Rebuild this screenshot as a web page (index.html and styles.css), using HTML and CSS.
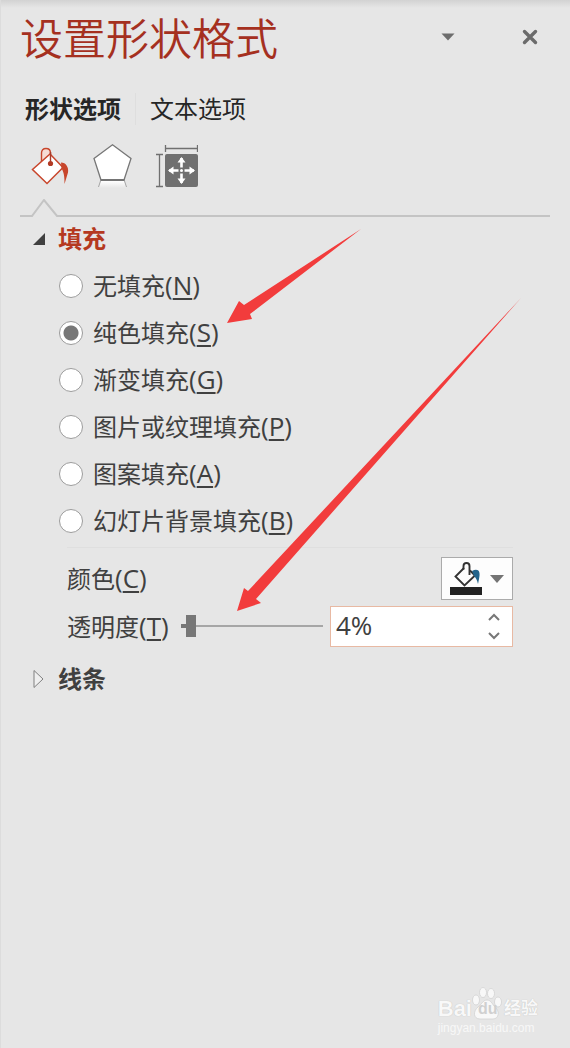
FILE: index.html
```html
<!DOCTYPE html>
<html lang="zh-CN">
<head>
    <meta charset="utf-8">
    <meta name="viewport" content="width=device-width, initial-scale=1.0">
    <title>设置形状格式</title>
    <link rel="stylesheet" href="styles.css">
</head>
<body>
    <div class="pane">
        <header class="pane-header">
            <h1>设置形状格式</h1>
            <button type="button" class="icon-button" aria-label="任务窗格选项">
                <svg width="14" height="8" viewBox="0 0 14 8"><path d="M0.5 0.5h13L7 7.5z" fill="#6d6d6d"/></svg>
            </button>
            <button type="button" class="icon-button" aria-label="关闭">
                <svg width="16" height="16" viewBox="0 0 16 16"><path d="M2.5 2.5l11 11M13.5 2.5l-11 11" stroke="#6b6b6b" stroke-width="3.4" stroke-linecap="round"/></svg>
            </button>
        </header>

        <nav class="tabs">
            <button type="button" class="tab active">形状选项</button>
            <button type="button" class="tab">文本选项</button>
        </nav>

        <nav class="categories">
            <button type="button" class="category" aria-label="填充与线条">
                <svg width="40" height="44" viewBox="0 0 40 44" fill="none">
                    <path d="M11.500 18V9q0-4.500 4.500-4.500T20.500 9v3" fill="#f6dcd5" stroke="#c8462c" stroke-width="1.400"/>
                    <path d="M20 10L33 23.500 17 39.500 2.500 25.500z" fill="#fff" stroke="#c8462c" stroke-width="1.500"/>
                    <path d="M31 18.500c5 0 8 5 7 10l-3.500 11.500c0-6 0-10-3-16z" fill="#c8462c"/>
                    <path d="M20.500 8v11" stroke="#a73a28" stroke-width="1.400"/>
                    <circle cx="20.500" cy="19.500" r="2.600" fill="#b23a24"/>
                </svg>
            </button>
            <button type="button" class="category" aria-label="效果">
                <svg width="40" height="44" viewBox="0 0 40 44" fill="none">
                    <defs>
                        <linearGradient id="mirror" x1="0" y1="0" x2="0" y2="1">
                            <stop offset="0" stop-color="#fff"/>
                            <stop offset="1" stop-color="#e6e6e6"/>
                        </linearGradient>
                    </defs>
                    <path d="M9 37h23l3 7H6z" fill="url(#mirror)"/>
                    <path d="M8.500 37l-2 6M32.500 37l2 6" stroke="#a5a5a5"/>
                    <path d="M20.500 0.800L39 14.500 32 36H9L2 14.500z" fill="#fff" stroke="#777" stroke-width="1.300"/>
                    <path d="M8.500 36h24" stroke="#747474" stroke-width="2"/>
                </svg>
            </button>
            <button type="button" class="category" aria-label="大小与属性">
                <svg width="44" height="44" viewBox="0 0 44 44" fill="none">
                    <path d="M11.500 1v7M43.500 1v7M11.500 4.500h32M2 10.500h7M2 42.500h7M5.500 10.500v32" stroke="#707070" stroke-width="1.300"/>
                    <rect x="11" y="10" width="33" height="33" rx="2" fill="#707070"/>
                    <path d="M27.500 14v25M15 26.500h25" stroke="#fff" stroke-width="2.600"/>
                    <path d="M27.500 13l4 5.500h-8zM27.500 40l4-5.500h-8zM14 26.500l5.500-4v8zM41 26.500l-5.500-4v8z" fill="#fff"/>
                    <rect x="24.500" y="23.500" width="6" height="6" fill="#707070"/>
                    <circle cx="27.500" cy="26.500" r="1.500" fill="#fff"/>
                </svg>
            </button>
        </nav>
        <div class="notch-line">
            <svg width="38" height="18" viewBox="0 0 38 18"><path d="M0 17h12L24 1l13 16h1" fill="none" stroke="#c4c4c4" stroke-width="2"/></svg>
        </div>

        <section>
            <h2 class="section-title open">
                <button type="button" aria-expanded="true">
                    <svg width="14" height="14" viewBox="0 0 14 14"><path d="M13 1v12H1z" fill="#404040"/></svg>
                    填充
                </button>
            </h2>
            <div class="fill-options">
                <label><input type="radio" name="fill"><span>无填充<span class="key">(<u>N</u>)</span></span></label>
                <label><input type="radio" name="fill" checked><span>纯色填充<span class="key">(<u>S</u>)</span></span></label>
                <label><input type="radio" name="fill"><span>渐变填充<span class="key">(<u>G</u>)</span></span></label>
                <label><input type="radio" name="fill"><span>图片或纹理填充<span class="key">(<u>P</u>)</span></span></label>
                <label><input type="radio" name="fill"><span>图案填充<span class="key">(<u>A</u>)</span></span></label>
                <label><input type="radio" name="fill"><span>幻灯片背景填充<span class="key">(<u>B</u>)</span></span></label>
            </div>
            <div class="fill-settings">
                <div class="row">
                    <label for="color">颜色<span class="key">(<u>C</u>)</span></label>
                    <button type="button" id="color" class="color-button">
                        <svg width="34" height="36" viewBox="0 0 34 36" fill="none">
                            <path d="M15 7L6.500 15.500l9 9L26 14.500 21 9.500" stroke="#333" stroke-width="1.900"/>
                            <path d="M14.500 8.500V5q0-3 3-3t3 3v9" stroke="#333" stroke-width="1.900"/>
                            <path d="M23 10c6-3 9 0 7 8l-1 5c-1-4-2-6-4-8z" fill="#24658c"/>
                            <rect x="1" y="26" width="32" height="8" fill="#222"/>
                        </svg>
                        <svg width="14" height="8" viewBox="0 0 14 8"><path d="M0 0h14L7 8z" fill="#747474"/></svg>
                    </button>
                </div>
                <div class="row">
                    <label for="transparency">透明度<span class="key">(<u>T</u>)</span></label>
                    <input type="range" id="transparency" class="slider" min="0" max="100" value="4">
                    <div class="spinner">
                        <input type="text" id="transparencyValue" value="4%" aria-label="透明度">
                        <div class="spinner-buttons">
                            <button type="button" aria-label="增加"><svg width="12" height="8" viewBox="0 0 12 8"><path d="M1 7l5-5 5 5" fill="none" stroke="#777" stroke-width="2"/></svg></button>
                            <button type="button" aria-label="减少"><svg width="12" height="8" viewBox="0 0 12 8"><path d="M1 1l5 5 5-5" fill="none" stroke="#777" stroke-width="2"/></svg></button>
                        </div>
                    </div>
                </div>
            </div>
        </section>

        <section>
            <h2 class="section-title">
                <button type="button" aria-expanded="false">
                    <svg width="14" height="20" viewBox="0 0 14 20"><path d="M2 1.500v17l9-8.500z" fill="#efefef" stroke="#808080"/></svg>
                    线条
                </button>
            </h2>
        </section>

        <!-- annotation arrows -->
        <svg class="arrow arrow-fill" width="134" height="94" viewBox="0 0 134 94"><path d="M134 0L23 85l2 5-25 4 12-22 5 4z" fill="#f23c3c"/></svg>
        <svg class="arrow arrow-slider" width="286" height="314" viewBox="0 0 286 314"><path d="M285 0L20 301l5 4-24 8 7-23 4 3z" fill="#f23c3c"/></svg>

        <div class="watermark">
            <div class="watermark-logo">
                <span>Bai</span>
                <span class="paw">
                    <svg width="30" height="34" viewBox="0 0 30 34" fill="#f8f8f8" stroke="#cfcfcf" stroke-width="0.700">
                        <ellipse cx="4" cy="14" rx="3.500" ry="5"/>
                        <ellipse cx="11" cy="6.500" rx="3.500" ry="5"/>
                        <ellipse cx="19" cy="7.500" rx="3.500" ry="5"/>
                        <ellipse cx="26" cy="16" rx="3.500" ry="5"/>
                        <path d="M15 14c4 0 5 4 8 7 5 4 4 12-2 12H8C1 33 1 25 6 21c4-3 5-7 9-7z"/>
                    </svg>
                    <span class="paw-text">du</span>
                </span>
                <span class="watermark-cn">经验</span>
            </div>
            <div class="watermark-url">jingyan.baidu.com</div>
        </div>
    </div>
</body>
</html>
```
FILE: styles.css
```css
* {
    box-sizing: border-box;
}
body {
    margin: 0;
    min-height: 100vh;
    background: #e6e6e6 linear-gradient(#d2d2d2, #e6e6e6) no-repeat top / 100% 8px;
    color: #404040;
    font-family: "Open Sans", "Noto Sans CJK SC", sans-serif;
    font-size: 24px;
    line-height: 32px;
}
button {
    padding: 0;
    border: none;
    background: none;
    color: inherit;
    font: inherit;
    cursor: pointer;
}
svg {
    display: block;
    flex: none;
}
.pane {
    position: relative;
    min-height: 100vh;
    padding: 15px 20px 0;
    box-shadow: inset 1px 0 #dcdcdc;
}
.pane-header {
    display: flex;
    align-items: center;
}
h1 {
    flex: 1;
    margin: 0;
    color: #a5301f;
    font-size: 43px;
    font-weight: 350;
    line-height: 48px;
}
.icon-button {
    display: flex;
    align-items: center;
    justify-content: center;
    width: 40px;
    height: 40px;
    margin: -4px 0 0 42px;
}
.tabs {
    display: flex;
    margin-top: 30px;
}
.tab {
    padding: 0 14px;
    color: #262626;
}
.tab:first-child {
    padding-left: 5px;
    border-right: 1px solid #dedede;
}
.tab.active {
    font-weight: bold;
}
.categories {
    display: flex;
    gap: 22px;
    margin-top: 19px;
    padding-left: 10px;
}
.notch-line {
    display: flex;
    margin-top: 11px;
}
.notch-line::after {
    content: "";
    flex: 1;
    border-bottom: 2px solid #c4c4c4;
}
.section-title {
    margin: 6px 0 0;
    font-size: 24px;
    font-weight: bold;
}
.section-title button {
    display: flex;
    align-items: center;
    gap: 12px;
    padding-left: 12px;
}
.section-title.open {
    color: #b5391f;
}
.key {
    font-size: 26px;
}
.key u {
    text-decoration-thickness: 2px;
    text-underline-offset: 3px;
}
.fill-options {
    padding: 7px 0 3px 39px;
}
.fill-options label {
    display: flex;
    align-items: center;
    gap: 10px;
    height: 47px;
}
.fill-options input {
    appearance: none;
    width: 24px;
    height: 24px;
    margin: 0;
    border: 1px solid #9c9c9c;
    border-radius: 50%;
    background: #fff;
}
.fill-options input:checked {
    background: radial-gradient(circle, #777 7px, #fff 8px);
}
.fill-settings {
    margin: 0 37px 0 47px;
    padding-top: 9px;
    border-top: 1px solid #dfdfdf;
}
.row {
    display: flex;
    align-items: center;
    margin-bottom: 6px;
}
.color-button {
    display: flex;
    align-items: center;
    gap: 7px;
    width: 72px;
    height: 43px;
    margin-left: auto;
    padding-left: 7px;
    border: 1px solid #ababab;
    background: #fdfdfd;
}
.slider {
    appearance: none;
    flex: 1;
    min-width: 0;
    height: 22px;
    margin: 0 7px 2px 12px;
    background: linear-gradient(#777, #777) no-repeat left / 6px 4px, linear-gradient(#a6a6a6, #a6a6a6) no-repeat center / 100% 2px;
}
.slider::-webkit-slider-thumb {
    appearance: none;
    width: 10px;
    height: 22px;
    background: #777;
}
.spinner {
    display: flex;
    width: 183px;
    height: 41px;
    border: 1px solid #e8b9a3;
    background: #fff;
}
.spinner input {
    flex: 1;
    min-width: 0;
    padding: 0 5px 4px;
    border: none;
    background: none;
    color: #404040;
    font: inherit;
    font-size: 26px;
}
.spinner-buttons {
    display: flex;
    flex-direction: column;
    width: 36px;
}
.spinner-buttons button {
    display: flex;
    flex: 1;
    align-items: center;
    justify-content: center;
}
section + section {
    padding-top: 4px;
}
.arrow {
    position: absolute;
    pointer-events: none;
}
.arrow-fill {
    top: 229px;
    left: 227px;
}
.arrow-slider {
    top: 298px;
    left: 236px;
}
.watermark {
    position: absolute;
    right: 32px;
    bottom: 12px;
    color: #f8f8f8;
    text-shadow: 0 0 1px #b8b8b8;
}
.watermark-logo {
    display: flex;
    align-items: flex-end;
    font-family: "Liberation Sans", "Noto Sans CJK SC", sans-serif;
    font-size: 22px;
    font-weight: bold;
    line-height: 22px;
}
.paw {
    position: relative;
}
.paw-text {
    position: absolute;
    bottom: 0;
    left: 6px;
    color: #d0d0d0;
    font-size: 16px;
    text-shadow: none;
}
.watermark-cn {
    margin-left: 2px;
    font-size: 17px;
}
.watermark-url {
    font-family: "Liberation Sans", sans-serif;
    font-size: 12px;
    line-height: 16px;
    text-shadow: none;
}
```
